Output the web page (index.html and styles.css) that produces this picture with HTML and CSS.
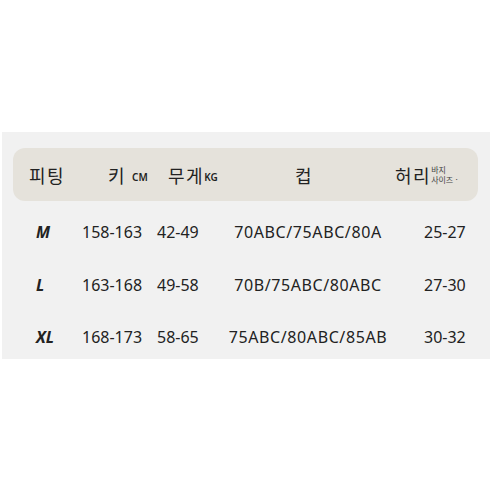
FILE: index.html
```html
<!DOCTYPE html>
<html lang="ko">
<head>
<meta charset="utf-8">
<link rel="stylesheet" href="styles.css">
</head>
<body>
<div class="panel">
  <div class="head">
    <div class="h1">피팅</div>
    <div class="h2">키<span class="unit unit-cm">CM</span></div>
    <div class="h3">무게<span class="unit">KG</span></div>
    <div class="h4">컵</div>
    <div class="h5">허리<span class="sub"><span>바지</span><span>사이즈 ·</span></span></div>
  </div>
  <div class="rows">
    <div class="row">
      <div class="size">M</div>
      <div>158-163</div>
      <div>42-49</div>
      <div class="cup">70ABC/75ABC/80A</div>
      <div class="waist">25-27</div>
    </div>
    <div class="row">
      <div class="size">L</div>
      <div>163-168</div>
      <div>49-58</div>
      <div class="cup">70B/75ABC/80ABC</div>
      <div class="waist">27-30</div>
    </div>
    <div class="row">
      <div class="size">XL</div>
      <div>168-173</div>
      <div>58-65</div>
      <div class="cup">75ABC/80ABC/85AB</div>
      <div class="waist">30-32</div>
    </div>
  </div>
</div>
</body>
</html>
```
FILE: styles.css
```css
html, body {
  margin: 0;
  padding: 0;
  background: #ffffff;
}
body {
  font-family: "Noto Sans", "Noto Sans CJK KR", sans-serif;
  color: #222222;
}
.panel {
  margin: 132px 0 0 2px;
  width: 488px;
  height: 227px;
  background: #f1f1f1;
  padding-top: 16px;
  box-sizing: border-box;
  overflow: hidden;
}
.head {
  margin-left: 11px;
  width: 465px;
  height: 53px;
  border-radius: 12px;
  background: #e5e2db;
  display: grid;
  grid-template-columns: 79px 60px 56px 168px 1fr;
  align-items: center;
  padding-left: 16px;
  box-sizing: border-box;
  font-family: "Noto Sans CJK KR", sans-serif;
  font-size: 18px;
  letter-spacing: 1.5px;
}
.head > div {
  display: flex;
  align-items: center;
}
.h4 {
  justify-content: center;
  padding-right: 8px;
}
.h5 {
  padding-left: 3px;
}
.unit {
  font-family: "Noto Sans", sans-serif;
  font-size: 10px;
  font-weight: 600;
  letter-spacing: 0;
  margin-top: 4px;
}
.unit-cm {
  margin-left: 6px;
}
.sub {
  display: flex;
  flex-direction: column;
  font-size: 8px;
  line-height: 10px;
  letter-spacing: 0;
  margin-left: 0;
  color: #444444;
}
.rows {
  margin-top: 5px;
  padding-left: 34px;
}
.row {
  height: 52.5px;
  display: grid;
  grid-template-columns: 46px 75px 67px 168px 1fr;
  align-items: center;
  font-size: 16px;
}
.size {
  font-weight: 700;
  font-style: italic;
}
.cup {
  text-align: center;
  letter-spacing: 0.6px;
}
.waist {
  padding-left: 32px;
}
```
